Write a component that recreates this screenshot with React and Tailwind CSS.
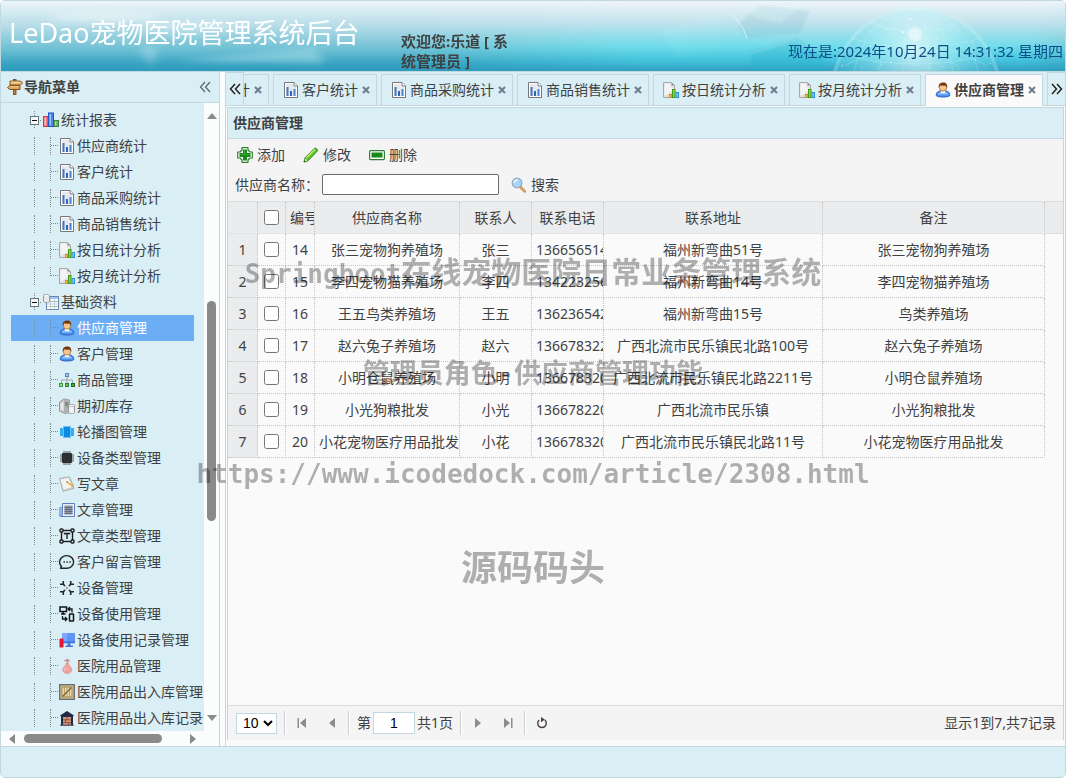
import React, { useState } from 'react';

const treeData = [
  {
    text: '统计报表',
    icon: 'bars',
    children: [
      { text: '供应商统计', icon: 'report' },
      { text: '客户统计', icon: 'report' },
      { text: '商品采购统计', icon: 'report' },
      { text: '商品销售统计', icon: 'report' },
      { text: '按日统计分析', icon: 'pageChart' },
      { text: '按月统计分析', icon: 'pageChart' },
    ],
  },
  {
    text: '基础资料',
    icon: 'sheet',
    open: true,
    children: [
      { text: '供应商管理', icon: 'user' },
      { text: '客户管理', icon: 'user' },
      { text: '商品管理', icon: 'sitemap' },
      { text: '期初库存', icon: 'server' },
      { text: '轮播图管理', icon: 'carousel' },
      { text: '设备类型管理', icon: 'chip' },
      { text: '写文章', icon: 'write' },
      { text: '文章管理', icon: 'article' },
      { text: '文章类型管理', icon: 'textBox' },
      { text: '客户留言管理', icon: 'message' },
      { text: '设备管理', icon: 'device' },
      { text: '设备使用管理', icon: 'deviceUse' },
      { text: '设备使用记录管理', icon: 'monitor' },
      { text: '医院用品管理', icon: 'supply' },
      { text: '医院用品出入库管理', icon: 'crate' },
      { text: '医院用品出入库记录管理', icon: 'warehouse' },
    ],
  },
];

const tabs = [
  { text: '供应商统计', icon: 'report' },
  { text: '客户统计', icon: 'report' },
  { text: '商品采购统计', icon: 'report' },
  { text: '商品销售统计', icon: 'report' },
  { text: '按日统计分析', icon: 'pageChart' },
  { text: '按月统计分析', icon: 'pageChart' },
  { text: '供应商管理', icon: 'user', active: true },
];

const suppliers = [
  { id: 14, name: '张三宠物狗养殖场', contact: '张三', number: '136656514', address: '福州新弯曲51号', remarks: '张三宠物狗养殖场' },
  { id: 15, name: '李四宠物猫养殖场', contact: '李四', number: '134223256', address: '福州新弯曲14号', remarks: '李四宠物猫养殖场' },
  { id: 16, name: '王五鸟类养殖场', contact: '王五', number: '136236542', address: '福州新弯曲15号', remarks: '鸟类养殖场' },
  { id: 17, name: '赵六兔子养殖场', contact: '赵六', number: '136678322', address: '广西北流市民乐镇民北路100号', remarks: '赵六兔子养殖场' },
  { id: 18, name: '小明仓鼠养殖场', contact: '小明', number: '136678320', address: '广西北流市民乐镇民北路2211号', remarks: '小明仓鼠养殖场' },
  { id: 19, name: '小光狗粮批发', contact: '小光', number: '136678220', address: '广西北流市民乐镇', remarks: '小光狗粮批发' },
  { id: 20, name: '小花宠物医疗用品批发', contact: '小花', number: '136678320', address: '广西北流市民乐镇民北路11号', remarks: '小花宠物医疗用品批发' },
];

const shapes = {
  bars: (
    <>
      <rect x="0.5" y="4.5" width="4.5" height="10" fill="#f4777f" stroke="#d8323d" />
      <rect x="1.5" y="5.5" width="1.5" height="8" fill="#fbb9bd" />
      <rect x="5.5" y="1" width="5" height="13.5" fill="#4d86ea" stroke="#1d55c4" />
      <rect x="6.5" y="2" width="1.5" height="11.5" fill="#9fc1f8" />
      <rect x="11" y="8.5" width="4.5" height="6" fill="#6db26c" stroke="#35803a" />
      <rect x="12" y="9.5" width="1.2" height="4" fill="#b4dcb0" />
    </>
  ),
  report: (
    <>
      <path d="M1.5 0.5h9.5l3.5 3.5v11.5h-13z" fill="#fff" stroke="#76777b" />
      <path d="M3 2h7v3h3v9H3z" fill="#e6e8ee" />
      <path d="M11 0.5v3.5h3.5" fill="#fff" stroke="#76777b" />
      <rect x="3.5" y="5" width="2" height="9" fill="#3f78c4" />
      <rect x="7" y="9" width="2" height="5" fill="#2f66b8" />
      <rect x="10.5" y="7" width="2" height="7" fill="#4b86d2" />
    </>
  ),
  pageChart: (
    <>
      <path d="M0.5 0.5h8l3 3v12h-11z" fill="#e0e0e0" stroke="#a8a8a8" />
      <path d="M1.5 1.5h6v4h3V8l-9 6z" fill="#f4f4f4" />
      <path d="M8.5 0.5v3h3z" fill="#8f8f8f" />
      <rect x="6.5" y="12.5" width="2" height="3" fill="#fbc14c" stroke="#dd8d16" />
      <rect x="9.5" y="7.5" width="2.5" height="8" fill="#8ed63f" stroke="#3f9a1c" />
      <rect x="13" y="10.5" width="2.5" height="5" fill="#7fcaf5" stroke="#2a8fd4" />
    </>
  ),
  sheet: (
    <>
      <rect x="3.5" y="2.5" width="12" height="13" fill="#fff" stroke="#6c87b4" />
      <rect x="4" y="3" width="11" height="2" fill="#a9c4ec" />
      <path d="M4 7.5h11M4 10h11M4 12.5h11M7.5 5v10M11.5 5v10" stroke="#a9bcd0" strokeWidth="0.7" />
      <path d="M8 7.5h7M8 12.5h7" stroke="#9cc79a" />
      <path d="M0.5 1.5c0-1.4 6-1.4 6 0v6c0 1.4-6 1.4-6 0z" fill="#e9e9e9" stroke="#999" />
      <ellipse cx="3.5" cy="1.6" rx="2.4" ry="0.7" fill="#fff" />
    </>
  ),
  user: (
    <>
      <path d="M1.200 13.500c0-3.500 2.500-4.500 4.300-4.500h5c1.800 0 4.300 1 4.300 4.500-1.500 2-12.100 2-13.600 0z" fill="#4b93ee" stroke="#2359b3" strokeWidth="0.9" />
      <path d="M3 12.500c.4-2 2-2.600 3.500-2.600h3c1.500 0 3.100.6 3.500 2.600" fill="#94c4fb" />
      <path d="M5.500 8.500h5L9.800 11H6.200z" fill="#fff" />
      <circle cx="8" cy="5.500" r="3.700" fill="#f6c590" stroke="#a05a1c" strokeWidth="0.7" />
      <path d="M3.900 6C3 2 5.500.4 8.200.4c3 0 4.600 2 3.900 5.600-.6-1.300-.8-2.200-1.500-2.600-2 .5-4 .2-5.400-.1-.7.600-.9 1.500-1.300 2.700z" fill="#74380d" />
    </>
  ),
  sitemap: (
    <>
      <rect x="6.500" y="1.500" width="3" height="3" fill="#a9c4f2" stroke="#5f83c4" />
      <path d="M8 5v3M2.500 11V8h11v3M8 8v3" fill="none" stroke="#9aa8b6" />
      <rect x="0.500" y="11.500" width="3" height="3" fill="#9bdb8e" stroke="#3a9a3b" />
      <rect x="6.500" y="11.500" width="3" height="3" fill="#6cc063" stroke="#2b842f" />
      <rect x="12.500" y="11.500" width="3" height="3" fill="#4aa84a" stroke="#1b6d21" />
    </>
  ),
  server: (
    <>
      <path d="M0.500 4 5 1l5.500 1v12.500L6 15.500.5 13z" fill="#c6c7c8" stroke="#88898b" strokeWidth="0.800" />
      <path d="M5 1.500v13.500l5.500-1V2z" fill="#b0b2b4" />
      <path d="M1.500 5.500 4.500 4v8.500l-3-.5z" fill="#e9e9ea" />
      <path d="M6 5h3.500M6 7h3.500" stroke="#5e6063" />
      <circle cx="8" cy="9.500" r="0.8" fill="#62c743" />
      <path d="M9.500 7.500c0-1.400 6-1.400 6 0v7c0 1.400-6 1.400-6 0z" fill="#f2f2f2" stroke="#96989a" />
      <ellipse cx="12.500" cy="7.500" rx="3" ry="1" fill="#fff" stroke="#96989a" strokeWidth="0.6" />
    </>
  ),
  carousel: (
    <>
      <rect x="1" y="4" width="3" height="8" fill="#36aef5" />
      <rect x="12" y="4" width="3" height="8" fill="#36aef5" />
      <rect x="4" y="2.500" width="8" height="11" fill="#0a8be0" />
      <path d="M4.500 3v10M11.500 3v10" stroke="#5ec3fa" />
    </>
  ),
  chip: (
    <>
      <path d="M5 1v14M7 1v14M9 1v14M11 1v14M1 5h14M1 7h14M1 9h14M1 11h14" stroke="#5a5d5f" strokeWidth="1" />
      <rect x="3" y="3" width="10" height="10" rx="1" fill="#2c2e30" />
    </>
  ),
  write: (
    <>
      <path d="M0.500 2.500 10 .8l1.500 2 3.500 9.500-11 3z" fill="#d4d4d2" stroke="#a2a2a0" strokeWidth="0.8" />
      <path d="M1.500 3.500 9.500 2l3 9-8 2.500z" fill="#f3f3f0" />
      <path d="M8 5.500l7 4.200-.8 1.500-6.500-4.500z" fill="#e6a62f" />
      <path d="M7 5.200l1.800.5-.8 1z" fill="#444" />
    </>
  ),
  article: (
    <>
      <path d="M3.500 1.500h12v13H1.800c-1.300 0-1.300-2 0-2h1.700z" fill="#e9eef9" stroke="#5f7fc2" />
      <path d="M.8 5.500h2.500v8.500H.8z" fill="#a9bfe8" stroke="#5f7fc2" strokeWidth="0.7" />
      <rect x="5.500" y="3.500" width="8" height="9" fill="#8c96a8" />
      <path d="M5.500 5.500h8M5.500 7.500h8M5.500 9.500h8M5.500 11.500h8" stroke="#5d687c" strokeWidth="0.9" />
    </>
  ),
  textBox: (
    <>
      <rect x="2.500" y="2.500" width="11" height="11" fill="none" stroke="#1c1f20" strokeWidth="1.400" />
      <g fill="#daeef5" stroke="#1c1f20" strokeWidth="1.400">
        <rect x="1" y="1" width="3" height="3" rx="1" />
        <rect x="12" y="1" width="3" height="3" rx="1" />
        <rect x="1" y="12" width="3" height="3" rx="1" />
        <rect x="12" y="12" width="3" height="3" rx="1" />
      </g>
      <path d="M5.500 6.500v-1h5v1M8 5.500v5.500" fill="none" stroke="#1c1f20" strokeWidth="1.400" />
    </>
  ),
  message: (
    <>
      <path d="M2.500 12.300A7 6.300 0 1 1 6.500 14.200H1.500z" fill="none" stroke="#222728" strokeWidth="1.400" strokeLinejoin="round" />
      <path d="M4.500 8h1.400M7.400 8h1.400M10.300 8h1.400" stroke="#222728" strokeWidth="1.300" />
    </>
  ),
  device: (
    <>
      <path d="M6 6 4 4M10 6l2-2M6 10l-2 2M10 10l2 2" stroke="#252829" strokeWidth="1.700" />
      <path d="M1 4.300h3.300V1M11.700 1v3.300H15M1 11.700h3.300V15M11.700 15v-3.300H15" fill="none" stroke="#252829" strokeWidth="1.600" />
      <path d="M6.500 6.500l3 3M9.500 6.500l-3 3" stroke="#8b9294" strokeWidth="0.8" />
    </>
  ),
  deviceUse: (
    <g fill="none" stroke="#111415" strokeWidth="1.500">
      <rect x="1" y="1" width="6.500" height="4.500" />
      <path d="M4.200 5.500V8M2 8h4.500" />
      <rect x="10.500" y="8" width="4" height="7" rx="0.500" />
      <path d="M9.500 3h3.500v3.500M11 1 9 3l2 2M3.500 10v3H8M6 11l2 2-2 2" strokeWidth="1.300" />
    </g>
  ),
  monitor: (
    <>
      <rect x="3" y="1" width="13" height="10" fill="#7ca8ff" />
      <path d="M9 1h7v10H7z" fill="#5f93f4" />
      <rect x="3" y="9.500" width="13" height="1.800" fill="#3f72dc" />
      <path d="M8.500 11.300h3v2.200H14V15H6.500v-1.500h2z" fill="#3c78e0" />
      <rect x="0.500" y="6.500" width="4" height="9" rx="1" fill="#e8142f" />
    </>
  ),
  supply: (
    <>
      <path d="M8.300 0.800v5M5.500 3l3-1.500 2 2" stroke="#d47f82" strokeWidth="1.200" fill="none" />
      <path d="M7.500 5h1.800c.3 2.500 4 4.300 3.300 7.500-.5 2.200-2.500 3-4.400 3s-4-.9-4.400-3C3.200 9.300 7.200 7.500 7.500 5z" fill="#f0a3a3" stroke="#d98688" strokeWidth="0.600" />
      <path d="M5.500 12.500c0-1.300.8-2.200 1.700-2.700" stroke="#fbd5d5" fill="none" />
    </>
  ),
  crate: (
    <>
      <rect x="0.700" y="0.700" width="14.600" height="14.600" fill="#d9c392" stroke="#6a7072" strokeWidth="1.400" />
      <rect x="3" y="3" width="10" height="10" fill="#ecd9a8" stroke="#8b7d56" strokeWidth="0.800" />
      <path d="M5.500 3v10M8 3v10M10.500 3v10" stroke="#a98b50" strokeWidth="0.700" />
      <path d="M3.500 12.500l9-9" stroke="#7b6b45" strokeWidth="1.400" />
    </>
  ),
  warehouse: (
    <>
      <path d="M1 5.500 8 1l7 4.500-1 1v9H2v-9z" fill="#222c49" />
      <rect x="4" y="7" width="8" height="8.500" fill="#d3957a" />
      <path d="M4 9.800h8M4 12.600h8M8 7v2.800M6.500 9.800v2.800M9.800 12.600v3" stroke="#7a4a3a" strokeWidth="0.800" />
      <path d="M1 15.200h14" stroke="#3f4a68" />
    </>
  ),
  signpost: (
    <>
      <rect x="6.500" y="0.500" width="2.500" height="15" fill="#b8803e" stroke="#6e4516" strokeWidth="0.800" />
      <path d="M3 2h10.500l2 2-2 2H3z" fill="#e9bd78" stroke="#7b4c17" strokeWidth="0.900" />
      <path d="M2.500 6.500H13v4H2.500L.5 8.500z" fill="#d9a455" stroke="#7b4c17" strokeWidth="0.900" />
      <path d="M4 3.200h8.500M3.500 7.700h8" stroke="#fae3b8" strokeWidth="0.800" />
    </>
  ),
  add: (
    <>
      <path d="M5 .7h6V3l2 2h2.300v6H13l-2 2v2.300H5V13l-2-2H.7V5H3l2-2z" fill="#fff" stroke="#2f7d33" strokeWidth="1.200" strokeLinejoin="round" />
      <path d="M6 2.500h4V6h3.500v4H10v3.500H6V10H2.500V6H6z" fill="#178a1a" />
      <path d="M7 3.500h1.500V7H12v1H3.500V7H7z" fill="#35a831" />
    </>
  ),
  edit: (
    <>
      <path d="M1 15l1.300-4.500L11.500 1.300c1-1 3.800 1.500 2.800 2.800L5.300 13.500z" fill="#5cc326" stroke="#2b7c15" strokeWidth="0.900" />
      <path d="M3.500 10.800l8.500-8.500" stroke="#baf07c" strokeWidth="1.400" />
      <path d="M1 15l1.300-4.200 2.900 2.800z" fill="#eef3d8" stroke="#2b7c15" strokeWidth="0.700" />
      <path d="M1 15l.5-1.700 1.200 1.200z" fill="#1b4a0e" />
    </>
  ),
  remove: (
    <>
      <rect x="0.600" y="3.600" width="14.800" height="9" rx="1" fill="#fff" stroke="#2f7d33" strokeWidth="1.200" />
      <rect x="2.500" y="5.500" width="11" height="5" fill="#178a1a" />
    </>
  ),
  search: (
    <>
      <path d="M9.500 10l4.300 4.300" stroke="#b9824a" strokeWidth="2.600" strokeLinecap="round" />
      <path d="M10 10l4 4" stroke="#f0b25c" strokeWidth="1.400" strokeLinecap="round" />
      <circle cx="6" cy="6" r="4.800" fill="#a8d5fa" stroke="#93a9c2" strokeWidth="1.300" />
      <path d="M3 6c.2-2 2-3.300 4-3" stroke="#eef8ff" strokeWidth="1.600" fill="none" />
    </>
  ),
};

function Icon({ name }) {
  return (
    <svg className="h-4 w-4 shrink-0" viewBox="0 0 16 16" aria-hidden="true">
      {shapes[name]}
    </svg>
  );
}

function BannerArt() {
  const dots = [];
  for (let i = 0; i < 90; i += 1) {
    const a = i * 2.4;
    const r = Math.sqrt(i / 90) * 84;
    dots.push([915 + Math.cos(a) * r, 92 + Math.sin(a) * r, i % 7 === 0 ? 1.1 : 0.6]);
  }
  return (
    <svg
      className="absolute inset-0 h-full w-full"
      viewBox="0 0 1064 70"
      preserveAspectRatio="none"
      aria-hidden="true"
    >
      <defs>
        <linearGradient id="sky" x1="0" y1="0" x2="0" y2="1">
          <stop offset="0" stopColor="#edf5fa" />
          <stop offset="0.35" stopColor="#b7dde8" />
          <stop offset="0.7" stopColor="#6bbfd3" />
          <stop offset="0.9" stopColor="#36a2c1" />
          <stop offset="1" stopColor="#2f9bbd" />
        </linearGradient>
        <linearGradient id="sea" x1="0" y1="0" x2="0" y2="1">
          <stop offset="0" stopColor="#eff4f9" />
          <stop offset="0.3" stopColor="#c3e3ed" />
          <stop offset="0.65" stopColor="#6fdcea" />
          <stop offset="0.85" stopColor="#43c3dc" />
          <stop offset="1" stopColor="#319fbf" />
        </linearGradient>
        <linearGradient id="fade" x1="0" y1="0" x2="1" y2="0">
          <stop offset="0.38" stopColor="#000" />
          <stop offset="0.6" stopColor="#fff" />
          <stop offset="0.96" stopColor="#fff" />
          <stop offset="1" stopColor="#666" />
        </linearGradient>
        <mask id="right">
          <rect width="1064" height="70" fill="url(#fade)" />
        </mask>
        <linearGradient id="cube" x1="0" y1="0" x2="0.6" y2="1">
          <stop offset="0" stopColor="#fff" stopOpacity="0.2" />
          <stop offset="1" stopColor="#5fdcea" stopOpacity="0.1" />
        </linearGradient>
        <radialGradient id="globe" cx="0.5" cy="0.25" r="0.6">
          <stop offset="0" stopColor="#fff" stopOpacity="0.7" />
          <stop offset="0.4" stopColor="#b5f2f7" stopOpacity="0.45" />
          <stop offset="1" stopColor="#3cb6d0" stopOpacity="0.2" />
        </radialGradient>
        <filter id="soft">
          <feGaussianBlur stdDeviation="5 3" />
        </filter>
        <filter id="edge">
          <feGaussianBlur stdDeviation="1" />
        </filter>
      </defs>
      <rect width="1064" height="70" fill="url(#sky)" />
      <rect width="1064" height="70" fill="url(#sea)" mask="url(#right)" />
      <g filter="url(#soft)">
        <ellipse cx="105" cy="16" rx="55" ry="5" fill="#fff" opacity="0.4" />
        <ellipse cx="190" cy="26" rx="50" ry="5" fill="#fff" opacity="0.25" />
        <path d="M175 60l140-14 8 16z" fill="#a5dbe9" opacity="0.55" />
        <path d="M138 46h18l-6 20z" fill="#b5e2ee" opacity="0.5" />
      </g>
      <g filter="url(#edge)">
        <path d="M660 30l65-20 20 28-68 20z" fill="url(#cube)" />
        <path d="M745 38l-8-14 22-20 50 6-10 22z" fill="#7fb3c6" opacity="0.2" />
        <path d="M750 50l45-12 30 16-8 16h-67z" fill="#2fb3ce" opacity="0.35" />
        <path d="M750 52l43-12 30 14" stroke="#bff2f7" fill="none" opacity="0.5" />
        <path d="M745 0h60l-25 22-28-6z" fill="#e8fafc" opacity="0.25" />
        <circle cx="915" cy="92" r="84" fill="url(#globe)" />
        <path d="M831 92a84 84 0 0 1 168 0" fill="none" stroke="#d8fafc" strokeWidth="1.500" opacity="0.6" />
      </g>
      <path d="M723 11c13 4 20 16 23 27" stroke="#d9f8fb" strokeWidth="1.200" fill="none" opacity="0.7" />
      <g fill="none" stroke="#e4fcfd" strokeWidth="0.600" opacity="0.35">
        <ellipse cx="915" cy="92" rx="64" ry="84" />
        <ellipse cx="915" cy="92" rx="38" ry="84" />
        <ellipse cx="915" cy="92" rx="14" ry="84" />
        <path d="M872 24q43 12 86 0M852 38q63 16 126 0M842 54q73 18 146 0" />
        <path d="M840 66 915 34l70 30M870 22l45 12 36-18M915 34l-40 34M915 34l44 34" />
      </g>
      <circle cx="914" cy="33" r="7" fill="#fff" opacity="0.5" filter="url(#edge)" />
      <g fill="#fff" opacity="0.65">
        {dots.map(([x, y, r], index) => (
          <circle key={index} cx={x.toFixed(1)} cy={y.toFixed(1)} r={r} />
        ))}
      </g>
    </svg>
  );
}

function TreeNode({ item, last, selected, onSelect }) {
  return (
    <li>
      <a
        href="#"
        className={`flex h-[26px] items-center whitespace-nowrap pl-[15px] ${
          selected ? 'bg-[#6caef5] text-white' : ''
        }`}
        onClick={(e) => {
          e.preventDefault();
          onSelect(item.text);
        }}
      >
        <span className="flex h-[18px] w-4 shrink-0 justify-center">
          <span className="border-l border-dotted border-[#7d8a90]" />
        </span>
        <span className="flex h-[18px] w-4 shrink-0 justify-end">
          <span
            className={`w-2 border-l border-dotted border-[#7d8a90] ${last ? 'h-[9px]' : 'h-[18px]'}`}
          >
            <span className="block h-[9px] border-b border-dotted border-[#7d8a90]" />
          </span>
        </span>
        <span className="flex w-[18px] shrink-0 justify-center">
          <Icon name={item.icon} />
        </span>
        <span className="pl-px">{item.text}</span>
      </a>
    </li>
  );
}

function Sidebar() {
  const [current, setCurrent] = useState('供应商管理');

  return (
    <aside className="flex w-[219px] shrink-0 flex-col border-r border-[#c0d8de] bg-[#fbfcfc]">
      <div className="flex h-[31px] shrink-0 items-center justify-between border-b border-[#c0d8de] bg-[#daeef5] pl-1.5 pr-2">
        <h2 className="flex items-center gap-px font-bold">
          <Icon name="signpost" />
          导航菜单
        </h2>
        <button type="button" aria-label="收起">
          <svg className="h-3 w-3" viewBox="0 0 12 12" fill="none" stroke="#5c6a70" strokeWidth="1.3">
            <path d="M6 1 1.500 6 6 11M11 1 6.500 6 11 11" />
          </svg>
        </button>
      </div>
      <div className="flex min-h-0 flex-1">
        <nav className="min-w-0 flex-1 overflow-hidden bg-[#daeef5] pt-1">
          <ul className="px-2.5">
            {treeData.map((node) => (
              <li key={node.text}>
                <div className="flex h-[26px] items-center whitespace-nowrap pl-[15px]">
                  <span className="flex w-4 shrink-0">
                    <svg className="h-[18px] w-4" viewBox="0 0 16 18">
                      <path d="M8.500 0v18M8 9.500h8" stroke="#7d8a90" strokeDasharray="1 1" />
                      <rect x="4.500" y="5.500" width="8" height="8" fill="#f4fafc" stroke="#6b767b" />
                      <path d="M6 9.500h5" stroke="#111" />
                    </svg>
                  </span>
                  <span className="flex w-[18px] shrink-0 justify-center">
                    <Icon name={node.icon} />
                  </span>
                  <span className="pl-px">{node.text}</span>
                </div>
                <ul>
                  {node.children.map((item, index) => (
                    <TreeNode
                      key={item.text}
                      item={item}
                      last={!node.open && index === node.children.length - 1}
                      selected={current === item.text}
                      onSelect={setCurrent}
                    />
                  ))}
                </ul>
              </li>
            ))}
          </ul>
        </nav>
        <div className="flex w-[15px] shrink-0 flex-col items-center py-2.5">
          <div className="h-1.5 border-x-5 border-b-6 border-x-transparent border-b-[#8a8a8a]" />
          <div className="flex-[182]" />
          <div className="w-[9px] flex-[220] rounded-full bg-[#8a8a8a]" />
          <div className="flex-[194]" />
          <div className="h-1.5 border-x-5 border-t-6 border-x-transparent border-t-[#8a8a8a]" />
        </div>
      </div>
      <div className="flex h-[15px] shrink-0 items-center pl-2 pr-[23px]">
        <div className="mr-[9px] border-y-5 border-r-6 border-y-transparent border-r-[#8a8a8a]" />
        <div className="h-[9px] flex-[137] rounded-full bg-[#8a8a8a]" />
        <div className="flex-[28]" />
        <div className="border-y-5 border-l-6 border-y-transparent border-l-[#8a8a8a]" />
      </div>
    </aside>
  );
}

function Tabs() {
  return (
    <div className="flex h-[34px] shrink-0 border-b border-[#c0d8de] bg-[#daeef5]">
      <button
        type="button"
        aria-label="向左"
        className="flex w-[18px] shrink-0 items-center justify-center border-r border-t border-[#c0d8de]"
      >
        <svg className="h-3 w-3" viewBox="0 0 12 12" fill="none" stroke="#222" strokeWidth="1.5">
          <path d="M6 1 1.500 6 6 11M11 1 6.500 6 11 11" />
        </svg>
      </button>
      <div className="-mb-px flex min-w-0 flex-1 justify-end gap-1 overflow-hidden pr-1 pt-0.5">
        {tabs.map((tab) => (
          <div
            key={tab.text}
            className={`flex shrink-0 items-center border border-[#c0d8de] pl-[9px] pr-1.5 ${
              tab.active ? 'border-b-[#fafafa] bg-[#fafafa] font-bold' : 'bg-[#daeef5]'
            }`}
          >
            <a href="#" className="flex items-center gap-[3px] whitespace-nowrap">
              <Icon name={tab.icon} />
              {tab.text}
            </a>
            <button type="button" className="ml-1" aria-label={`关闭${tab.text}`}>
              <svg className="h-2 w-2" viewBox="0 0 8 8" stroke="#6d7b8e" strokeWidth="2">
                <path d="M1 1l6 6M7 1 1 7" />
              </svg>
            </button>
          </div>
        ))}
      </div>
      <button
        type="button"
        aria-label="向右"
        className="flex w-[18px] shrink-0 items-center justify-center border-l border-t border-[#c0d8de]"
      >
        <svg className="h-3 w-3" viewBox="0 0 12 12" fill="none" stroke="#222" strokeWidth="1.5">
          <path d="M1 1l4.500 5L1 11M6 1l4.500 5L6 11" />
        </svg>
      </button>
    </div>
  );
}

function ToolButton({ icon, children }) {
  return (
    <button type="button" className="flex items-center gap-1">
      <Icon name={icon} />
      {children}
    </button>
  );
}

function SupplierTable() {
  const th = 'overflow-hidden border-b border-r border-dotted border-[#c4c4c4] border-b-[#dcdddf] px-1 font-normal';
  const td = 'overflow-hidden border-b border-r border-dotted border-[#c4c4c4] px-1';

  return (
    <table className="w-full table-fixed border-separate border-spacing-0 whitespace-nowrap text-center">
      <colgroup>
        <col className="w-[30px]" />
        <col className="w-[28px]" />
        <col className="w-[29px]" />
        <col className="w-[145px]" />
        <col className="w-[72px]" />
        <col className="w-[72px]" />
        <col className="w-[219px]" />
        <col />
        <col className="w-[18px]" />
      </colgroup>
      <thead className="bg-[#ebecee]">
        <tr className="h-8">
          <th className={th} />
          <th className={th}>
            <input type="checkbox" aria-label="全选" className="mx-auto block h-[15px] w-[15px]" />
          </th>
          <th className={th}>编号</th>
          <th className={th}>供应商名称</th>
          <th className={th}>联系人</th>
          <th className={th}>联系电话</th>
          <th className={th}>联系地址</th>
          <th className={th}>备注</th>
          <th className="border-b border-[#dcdddf]" />
        </tr>
      </thead>
      <tbody>
        {suppliers.map((item, index) => (
          <tr key={item.id} className="h-8">
            <td className={`${td} bg-[#ebecee]`}>{index + 1}</td>
            <td className={td}>
              <input
                type="checkbox"
                aria-label={`选择${item.name}`}
                className="mx-auto block h-[15px] w-[15px]"
              />
            </td>
            <td className={td}>{item.id}</td>
            <td className={td}>{item.name}</td>
            <td className={td}>{item.contact}</td>
            <td className={td}>{item.number}</td>
            <td className={td}>{item.address}</td>
            <td className={td}>{item.remarks}</td>
            <td />
          </tr>
        ))}
      </tbody>
    </table>
  );
}

function PageButton({ label, children }) {
  return (
    <button type="button" aria-label={label} className="flex h-[30px] w-[30px] items-center justify-center">
      <svg className="h-3 w-3" viewBox="0 0 12 12" fill="#8c8c8c">
        {children}
      </svg>
    </button>
  );
}

function Separator() {
  return <span className="mx-px h-6 w-0.5 shrink-0 border-l border-[#ccd0d2] bg-white" />;
}

function Pagination() {
  return (
    <div className="flex h-[35px] shrink-0 items-center border-t border-[#d8dcdd] bg-[#f4f4f4] pl-2 pr-[7px]">
      <select
        aria-label="每页条数"
        defaultValue="10"
        className="mr-1.5 h-[21px] w-[41px] border border-[#c0d8de] bg-white pl-0.5 font-['Liberation_Sans',sans-serif] text-black"
      >
        <option>10</option>
        <option>20</option>
      </select>
      <Separator />
      <PageButton label="首页">
        <path d="M1.500 1h1.500v10H1.500zM10 1v10L4 6z" />
      </PageButton>
      <PageButton label="上一页">
        <path d="M9 1v10L3 6z" />
      </PageButton>
      <Separator />
      <label htmlFor="page" className="ml-1.5 mr-0.5">第</label>
      <input
        id="page"
        type="text"
        defaultValue="1"
        className="mr-0.5 h-[22px] w-[42px] border border-[#c0d8de] bg-white text-center font-['Liberation_Sans',sans-serif] text-black"
      />
      <span className="mr-1.5">共1页</span>
      <Separator />
      <PageButton label="下一页">
        <path d="M3 1v10l6-5z" />
      </PageButton>
      <PageButton label="尾页">
        <path d="M9 1h1.500v10H9zM2 1v10l6-5z" />
      </PageButton>
      <Separator />
      <PageButton label="刷新">
        <path d="M3.200 3A4.300 4.300 0 1 0 8.800 3" fill="none" stroke="#4a3f3c" strokeWidth="1.400" />
        <path d="M5 0v5.200L8.800 2.600z" fill="#4a3f3c" />
      </PageButton>
      <span className="ml-auto">显示1到7,共7记录</span>
    </div>
  );
}

function App() {
  return (
    <div className="h-screen bg-white font-['Noto_Sans','Noto_Sans_CJK_SC',sans-serif] text-sm leading-5 text-[#3f4243]">
      <div className="relative flex h-full flex-col overflow-hidden rounded-[5px] border border-[#c0d8de]">
        <header className="relative h-[71px] shrink-0 border-b border-[#c0d8de]">
          <BannerArt />
          <div className="relative flex h-full">
            <h1 className="w-[400px] shrink-0 whitespace-nowrap pl-2 pt-3.5 text-[27px] leading-9 text-white">
              LeDao宠物医院管理系统后台
            </h1>
            <div className="w-[120px] shrink-0 pt-[30px] text-[15px] font-bold">
              欢迎您:乐道 [ 系统管理员 ]
            </div>
            <div className="ml-auto self-end pb-2.5 pr-0.5 text-[15px] text-[#075089]">
              现在是:2024年10月24日 14:31:32 星期四
            </div>
          </div>
        </header>

        <div className="flex min-h-0 flex-1 gap-[5px] bg-[#fafdfe]">
          <Sidebar />
          <main className="flex min-w-0 flex-1 flex-col border-l border-[#c0d8de] bg-[#fafafa]">
            <Tabs />
            <div className="flex min-h-0 flex-1 flex-col px-px pb-1.5 pt-px">
              <section className="flex min-h-0 flex-1 flex-col border-x border-t border-[#c0d8de]">
                <h2 className="flex h-[31px] shrink-0 items-center border-b border-[#c0d8de] bg-[#daeef5] px-[5px] font-bold">
                  供应商管理
                </h2>
                <div className="shrink-0 border-b border-[#dcdddf] bg-[#f4f4f4] px-[7px] pb-1.5 pt-1.5">
                  <div className="flex gap-[18px] px-0.5">
                    <ToolButton icon="add">添加</ToolButton>
                    <ToolButton icon="edit">修改</ToolButton>
                    <ToolButton icon="remove">删除</ToolButton>
                  </div>
                  <div className="mt-[9px] flex items-center">
                    <label htmlFor="supplierName" className="w-[87px]">供应商名称：</label>
                    <input
                      id="supplierName"
                      type="text"
                      className="mr-3 h-[21px] w-[177px] rounded-xs border border-[#6b6b6b] bg-white px-1"
                    />
                    <ToolButton icon="search">搜索</ToolButton>
                  </div>
                </div>
                <div className="min-h-0 flex-1 overflow-hidden">
                  <SupplierTable />
                </div>
                <Pagination />
              </section>
            </div>
          </main>
        </div>

        <footer className="h-[31px] shrink-0 border-t border-[#c0d8de] bg-[#daeef5]" />

        <div className="pointer-events-none absolute inset-0 flex flex-col items-center whitespace-nowrap pt-[254px] font-['DejaVu_Sans_Mono','Noto_Sans_CJK_SC',monospace] text-[26px] font-bold leading-9 text-black/30">
          <p className="text-[30px]">
            <span className="text-[26px]">Springboot</span>在线宠物医院日常业务管理系统
          </p>
          <p className="mt-16 text-[27px]">管理员角色-供应商管理功能</p>
          <p className="mt-16">https://www.icodedock.com/article/2308.html</p>
          <p className="mt-[59px] text-[36px]">源码码头</p>
        </div>
      </div>
    </div>
  );
}

export default App;
